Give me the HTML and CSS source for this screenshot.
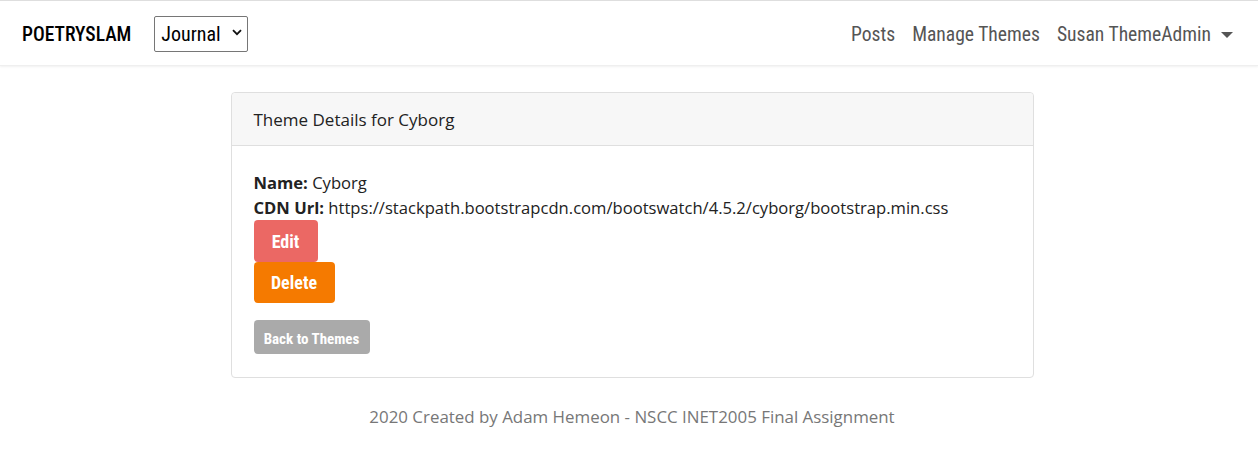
FILE: index.html
```html
<!DOCTYPE html>
<html>
<head>
<meta charset="utf-8">
<link rel="stylesheet" href="styles.css">
</head>
<body>
<header class="navbar">
  <div class="nav-left">
    <a class="brand">POETRYSLAM</a>
    <div class="select-wrap">
      <span class="select-text">Journal</span>
      <svg class="chev" width="10" height="7" viewBox="0 0 10 7"><path d="M1 1.2 L5 5.2 L9 1.2" fill="none" stroke="#111" stroke-width="1.8"/></svg>
    </div>
  </div>
  <nav class="nav-right">
    <a class="nav-link">Posts</a>
    <a class="nav-link">Manage Themes</a>
    <a class="nav-link dropdown">Susan ThemeAdmin <span class="caret"></span></a>
  </nav>
</header>
<main class="main">
  <section class="card">
    <div class="card-header">Theme Details for Cyborg</div>
    <div class="card-body">
      <div class="line"><b>Name:</b> Cyborg</div>
      <div class="line"><b>CDN Url:</b> https://stackpath.bootstrapcdn.com/bootswatch/4.5.2/cyborg/bootstrap.min.css</div>
      <div class="actions">
        <a class="btn btn-edit">Edit</a>
        <a class="btn btn-delete">Delete</a>
      </div>
      <a class="btn btn-back">Back to Themes</a>
    </div>
  </section>
</main>
<footer class="footer">2020 Created by Adam Hemeon - NSCC INET2005 Final Assignment</footer>
</body>
</html>
```

FILE: styles.css
```css
html, body { margin: 0; padding: 0; }
body {
  font-family: "Open Sans", "Noto Sans", sans-serif;
  color: #222;
  background: #fff;
  border-top: 1px solid #dedede;
}
.navbar {
  height: 65px;
  display: flex;
  align-items: center;
  justify-content: space-between;
  padding: 3px 22px 0;
  box-sizing: border-box;
  box-shadow: 0 1px 2px rgba(0,0,0,0.06);
  border-bottom: 1px solid #efefef;
  font-family: "Roboto", sans-serif;
  font-stretch: condensed;
}
.nav-left { display: flex; align-items: center; }
.brand {
  font-size: 19.5px;
  font-weight: 500;
  color: #000;
  margin-right: 23px;
}
.select-wrap {
  width: 94px;
  height: 36px;
  border: 1px solid #767676;
  border-radius: 2px;
  display: flex;
  align-items: center;
  justify-content: space-between;
  padding: 0 5px 0 6px;
  box-sizing: border-box;
  margin-top: -2px;
}
.select-text { font-size: 20px; color: #000; }
.chev { margin-top: -2px; }
.nav-right { display: flex; align-items: center; }
.nav-link {
  font-size: 19.6px;
  color: #555;
  padding: 0 8.5px;
}
.nav-link.dropdown { padding-right: 3px; display: flex; align-items: center; }
.caret {
  display: inline-block;
  width: 0; height: 0;
  margin-left: 10px;
  border-left: 6px solid transparent;
  border-right: 6px solid transparent;
  border-top: 6px solid #555;
}
.main {
  display: flex;
  justify-content: center;
  padding-top: 26px;
  padding-left: 6px;
}
.card {
  width: 803px;
  border: 1px solid #dfdfdf;
  border-radius: 4px;
  box-sizing: border-box;
}
.card-header {
  background: #f7f7f7;
  border-bottom: 1px solid #dfdfdf;
  height: 53px;
  display: flex;
  align-items: center;
  padding: 0 22px;
  font-size: 17px;
  border-radius: 4px 4px 0 0;
  box-sizing: border-box;
}
.card-body { padding: 24px 22px 23px; }
.line { font-size: 16.6px; line-height: 25px; }
.line b { font-weight: 700; }
.actions { display: flex; flex-direction: column; align-items: flex-start; }
.btn {
  display: inline-flex;
  align-items: center;
  justify-content: center;
  color: #fff;
  font-family: "Roboto", sans-serif;
  font-stretch: condensed;
  font-weight: bold;
  border-radius: 4px;
  box-sizing: border-box;
}
.btn-edit { background: #eb6864; width: 64px; height: 42px; font-size: 18px; }
.btn-delete { background: #f57a00; width: 81px; height: 41px; font-size: 18px; }
.btn-back { background: #aaa; width: 116px; height: 34px; font-size: 15px; margin-top: 17px; padding-top: 3px; }
.footer {
  text-align: center;
  color: #777;
  font-size: 16.9px;
  margin-top: 27px;
  padding-left: 6px;
}
```
